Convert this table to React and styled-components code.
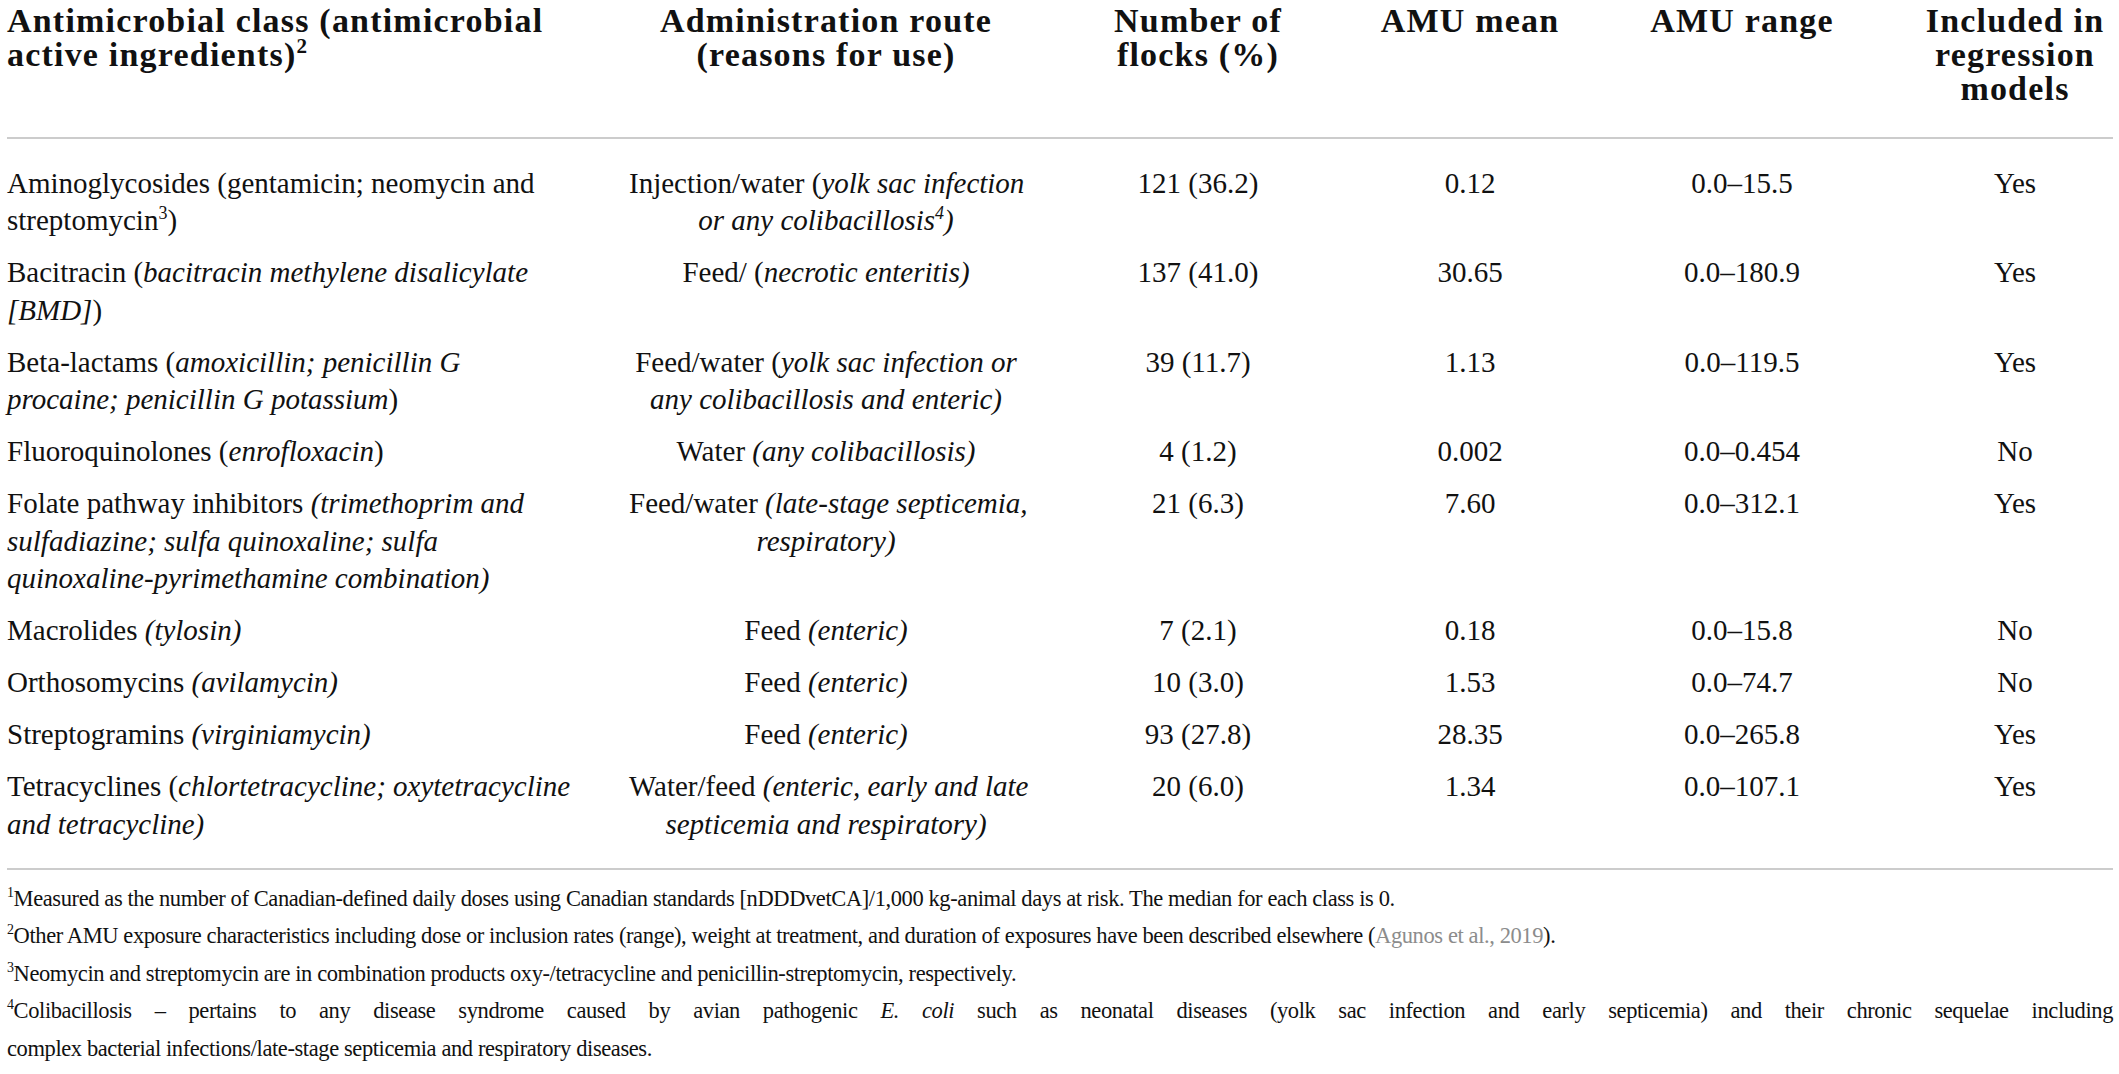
import React from "react";
import styled, { createGlobalStyle } from "styled-components";

const GlobalStyle = createGlobalStyle`
  html, body { margin: 0; padding: 0; background: #ffffff; }
  body { color: #111111; font-family: "Liberation Serif", "Times New Roman", serif; }
`;

const COLS = "622px 394px 350px 194px 350px 196px";

const Page = styled.div`
  width: 2106px;
  padding: 0 6px 0 7px;
`;

const HeaderRow = styled.div`
  display: grid;
  grid-template-columns: ${COLS};
  align-items: start;
  padding: 4px 0 31px;
  border-bottom: 2px solid #cccccc;
`;

const HeadCell = styled.div`
  font-weight: 700;
  font-size: 34px;
  line-height: 34px;
  letter-spacing: 1.2px;
  text-align: ${(p) => (p.$left ? "left" : "center")};
  color: #111;
`;

const Body = styled.div`
  padding: 18.5px 0 17px;
  border-bottom: 2px solid #cccccc;
`;

const Row = styled.div`
  display: grid;
  grid-template-columns: ${COLS};
  align-items: start;
  padding: 7.25px 0;
`;

const Cell = styled.div`
  font-size: 29px;
  line-height: 37.5px;
  text-align: ${(p) => (p.$left ? "left" : "center")};
  white-space: nowrap;
  color: #111;
`;

const Sup = styled.sup`
  font-size: 0.62em;
  line-height: 0;
  vertical-align: 0.62em;
`;

const Notes = styled.div`
  padding-top: 10px;
`;

const Note = styled.p`
  margin: 0;
  font-size: 22.5px;
  line-height: 37.5px;
  letter-spacing: -0.4px;
  text-align: left;
  text-align-last: ${(p) => (p.$justify ? "justify" : "auto")};
  color: #111;
`;

const Ref = styled.span`
  color: #8c8c8c;
`;

const header = [
  { left: true, content: <>Antimicrobial class (antimicrobial<br />active ingredients)<Sup>2</Sup></> },
  { content: <>Administration route<br />(reasons for use)</> },
  { content: <>Number of<br />flocks (%)</> },
  { content: <>AMU mean</> },
  { content: <>AMU range</> },
  { content: <>Included in<br />regression<br />models</> },
];

const rows = [
  {
    cls: <>Aminoglycosides (gentamicin; neomycin and<br />streptomycin<Sup>3</Sup>)</>,
    route: <>Injection/water (<i>yolk sac infection<br />or any colibacillosis<Sup>4</Sup>)</i></>,
    n: "121 (36.2)", mean: "0.12", range: "0.0–15.5", inc: "Yes",
  },
  {
    cls: <>Bacitracin (<i>bacitracin methylene disalicylate<br />[BMD]</i>)</>,
    route: <>Feed/ (<i>necrotic enteritis)</i></>,
    n: "137 (41.0)", mean: "30.65", range: "0.0–180.9", inc: "Yes",
  },
  {
    cls: <>Beta-lactams (<i>amoxicillin; penicillin G<br />procaine; penicillin G potassium</i>)</>,
    route: <>Feed/water (<i>yolk sac infection or<br />any colibacillosis and enteric)</i></>,
    n: "39 (11.7)", mean: "1.13", range: "0.0–119.5", inc: "Yes",
  },
  {
    cls: <>Fluoroquinolones (<i>enrofloxacin</i>)</>,
    route: <>Water <i>(any colibacillosis)</i></>,
    n: "4 (1.2)", mean: "0.002", range: "0.0–0.454", inc: "No",
  },
  {
    cls: <>Folate pathway inhibitors <i>(trimethoprim and<br />sulfadiazine; sulfa quinoxaline; sulfa<br />quinoxaline-pyrimethamine combination)</i></>,
    route: <>Feed/water <i>(late-stage septicemia,<br />respiratory)</i></>,
    n: "21 (6.3)", mean: "7.60", range: "0.0–312.1", inc: "Yes",
  },
  {
    cls: <>Macrolides <i>(tylosin)</i></>,
    route: <>Feed <i>(enteric)</i></>,
    n: "7 (2.1)", mean: "0.18", range: "0.0–15.8", inc: "No",
  },
  {
    cls: <>Orthosomycins <i>(avilamycin)</i></>,
    route: <>Feed <i>(enteric)</i></>,
    n: "10 (3.0)", mean: "1.53", range: "0.0–74.7", inc: "No",
  },
  {
    cls: <>Streptogramins <i>(virginiamycin)</i></>,
    route: <>Feed <i>(enteric)</i></>,
    n: "93 (27.8)", mean: "28.35", range: "0.0–265.8", inc: "Yes",
  },
  {
    cls: <>Tetracyclines (<i>chlortetracycline; oxytetracycline<br />and tetracycline)</i></>,
    route: <>Water/feed <i>(enteric, early and late<br />septicemia and respiratory)</i></>,
    n: "20 (6.0)", mean: "1.34", range: "0.0–107.1", inc: "Yes",
  },
];

export default function App() {
  return (
    <>
      <GlobalStyle />
      <Page>
        <HeaderRow>
          {header.map((h, i) => (
            <HeadCell key={i} $left={h.left}>{h.content}</HeadCell>
          ))}
        </HeaderRow>
        <Body>
          {rows.map((r, i) => (
            <Row key={i}>
              <Cell $left>{r.cls}</Cell>
              <Cell>{r.route}</Cell>
              <Cell>{r.n}</Cell>
              <Cell>{r.mean}</Cell>
              <Cell>{r.range}</Cell>
              <Cell>{r.inc}</Cell>
            </Row>
          ))}
        </Body>
        <Notes>
          <Note><Sup>1</Sup>Measured as the number of Canadian-defined daily doses using Canadian standards [nDDDvetCA]/1,000 kg-animal days at risk. The median for each class is 0.</Note>
          <Note><Sup>2</Sup>Other AMU exposure characteristics including dose or inclusion rates (range), weight at treatment, and duration of exposures have been described elsewhere (<Ref>Agunos et al., 2019</Ref>).</Note>
          <Note><Sup>3</Sup>Neomycin and streptomycin are in combination products oxy-/tetracycline and penicillin-streptomycin, respectively.</Note>
          <Note $justify><Sup>4</Sup>Colibacillosis – pertains to any disease syndrome caused by avian pathogenic <i>E. coli</i> such as neonatal diseases (yolk sac infection and early septicemia) and their chronic sequelae including</Note>
          <Note>complex bacterial infections/late-stage septicemia and respiratory diseases.</Note>
        </Notes>
      </Page>
    </>
  );
}
